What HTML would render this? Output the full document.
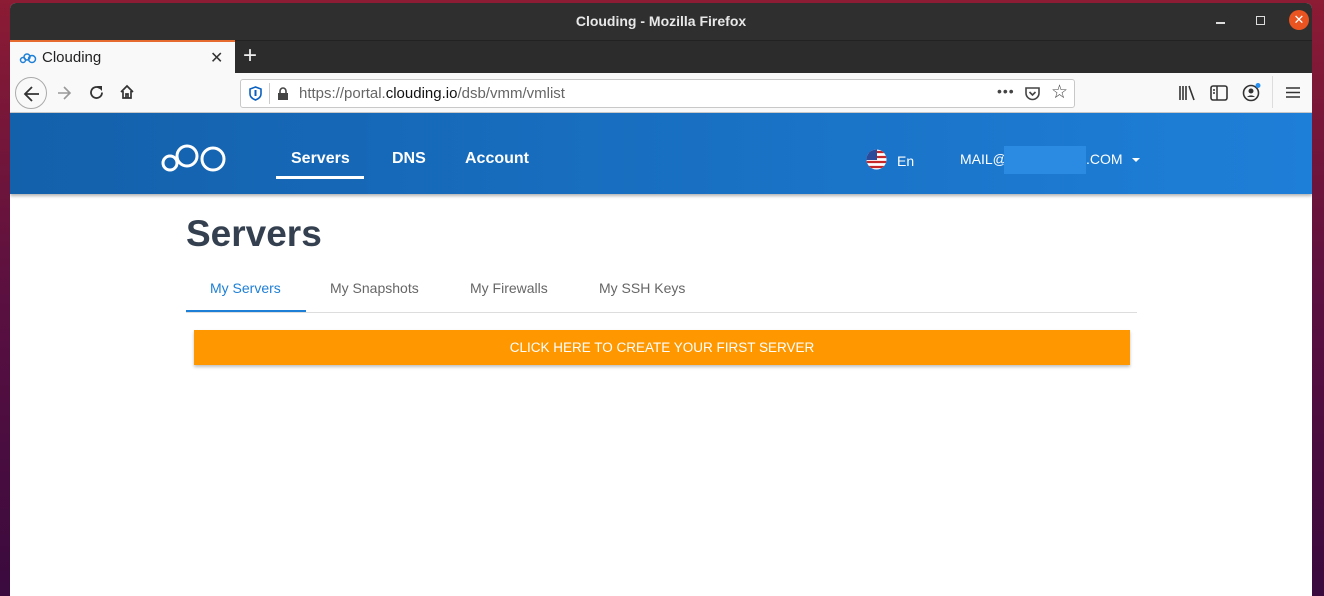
<!DOCTYPE html>
<html><head><meta charset="utf-8"><style>
*{margin:0;padding:0;box-sizing:border-box}
body{width:1324px;height:596px;overflow:hidden;position:relative;font-family:"Liberation Sans",sans-serif;background:linear-gradient(180deg,#8c1b34 0%,#5a1040 50%,#3a0a3e 100%)}
.a{position:absolute}
.win{left:10px;top:3px;width:1302px;height:593px;background:#fff;border-radius:6px 6px 0 0;overflow:hidden}
.title{left:0;top:0;width:1302px;height:37px;background:#2f2f2f;color:#e8e8e8;font-weight:bold;font-size:14px;text-align:center;line-height:37px}
.tabbar{left:0;top:37px;width:1302px;height:33px;background:#2c2c2c;border-top:1px solid #222}
.tab{left:0;top:37px;width:225px;height:34px;background:#f9f9fa;border-top:2px solid #e66b2f}
.nav{left:0;top:70px;width:1302px;height:40px;background:#f9f9fa;border-bottom:1px solid #ccc}
.url{left:230px;top:6px;width:835px;height:29px;background:#fff;border:1px solid #c8c8c8;border-radius:3px;font-size:15px;color:#666;line-height:27px}
.hdr{left:0;top:110px;width:1302px;height:81px;background:linear-gradient(90deg,#1360ab,#1e7fd8);box-shadow:0 2px 3px rgba(0,0,0,.3)}
.w{color:#fff}
</style></head><body>
<div class="a win">
 <div class="a title">Clouding - Mozilla Firefox</div>
 <div class="a" style="left:1206px;top:19px;width:9px;height:1.5px;background:#ddd"></div>
 <div class="a" style="left:1246px;top:13px;width:9px;height:9px;border:1.5px solid #ddd"></div>
 <div class="a" style="left:1279px;top:7px;width:20px;height:20px;border-radius:50%;background:#e95420;color:#fff;font-size:13px;text-align:center;line-height:20px">✕</div>
 <div class="a tabbar"></div>
 <div class="a tab"><svg class="a" style="left:9px;top:10px" width="18" height="12"><g fill="none" stroke="#1e7fd6" stroke-width="1.5"><circle cx="4" cy="8" r="2.5"/><circle cx="8" cy="5" r="3"/><circle cx="13" cy="7" r="3.5"/></g></svg>
 <div class="a" style="left:32px;top:7px;font-size:15px;color:#222">Clouding</div>
 <div class="a" style="left:200px;top:6px;font-size:16px;color:#333">✕</div></div>
 <div class="a" style="left:233px;top:40px;font-size:24px;color:#eee;line-height:26px">+</div>
 <div class="a nav">
  <div class="a" style="left:5px;top:4px;width:32px;height:32px;border:1px solid #aaa;border-radius:50%"><svg class="a" style="left:7px;top:7px" width="18" height="18"><path d="M16 9H3M9 2L2 9L9 16" fill="none" stroke="#333" stroke-width="1.8"/></svg></div>
  <svg class="a" style="left:46px;top:12px" width="16" height="16"><path d="M14 8H2M8 2L14 8L8 14" fill="none" stroke="#999" stroke-width="1.6"/></svg>
  <svg class="a" style="left:78px;top:11px" width="17" height="17"><path d="M14 8.5A5.5 5.5 0 1 1 12 4.3" fill="none" stroke="#333" stroke-width="1.8"/><path d="M9 2H14V7Z" fill="#333"/></svg>
  <svg class="a" style="left:109px;top:11px" width="16" height="16"><path d="M2 8L8 2L14 8M4 7V14H12V7M7 14V10H9V14" fill="none" stroke="#333" stroke-width="1.7"/></svg>
  <div class="a url">
   <svg class="a" style="left:8px;top:6px" width="13" height="15"><path d="M6.5 1L12 3V8C12 11 9 13 6.5 14C4 13 1 11 1 8V3Z" fill="none" stroke="#0a60c0" stroke-width="1.6"/><rect x="5.5" y="4" width="2" height="6" fill="#0a60c0"/></svg>
   <div class="a" style="left:28px;top:3px;width:1px;height:21px;background:#ccc"></div>
   <svg class="a" style="left:36px;top:7px" width="12" height="14"><rect x="1" y="6" width="10" height="7" fill="#444"/><path d="M3 6V4A3 3 0 0 1 9 4V6" fill="none" stroke="#444" stroke-width="1.6"/></svg>
   <span class="a" style="left:58px;top:0">https://portal.<span style="color:#111">clouding.io</span>/dsb/vmm/vmlist</span>
   <span class="a" style="left:756px;top:-2px;color:#444;font-size:14px;letter-spacing:1px">•••</span>
   <svg class="a" style="left:783px;top:6px" width="17" height="16"><path d="M2 2H15V7A6.5 6.5 0 0 1 2 7Z" fill="none" stroke="#444" stroke-width="1.6"/><path d="M5.5 6L8.5 9L11.5 6" fill="none" stroke="#444" stroke-width="1.6"/></svg>
   <div class="a" style="left:810px;top:-1px;font-size:19px;color:#444">☆</div>
  </div>
  <svg class="a" style="left:1168px;top:12px" width="18" height="16"><path d="M2 1V15M5 1V15M8 1V15M11 1L16 15" stroke="#333" stroke-width="1.6"/></svg>
  <svg class="a" style="left:1200px;top:12px" width="18" height="16"><rect x="1" y="1" width="16" height="14" rx="2" fill="none" stroke="#333" stroke-width="1.6"/><path d="M7 1V15M3 5H5M3 8H5" stroke="#333" stroke-width="1.5"/></svg>
  <svg class="a" style="left:1232px;top:9px" width="20" height="20"><circle cx="9" cy="11" r="7.5" fill="none" stroke="#333" stroke-width="1.6"/><circle cx="9" cy="9" r="2.5" fill="#333"/><path d="M5 15A5 4 0 0 1 13 15" fill="#333"/><circle cx="16" cy="3.5" r="2.5" fill="#2a90f0"/></svg>
  <div class="a" style="left:1262px;top:3px;width:1px;height:32px;background:#ddd"></div>
  <svg class="a" style="left:1276px;top:13px" width="14" height="13"><path d="M0 2H14M0 6.5H14M0 11H14" stroke="#333" stroke-width="1.6"/></svg>
 </div>
 <div class="a hdr">
  <svg class="a" style="left:151px;top:29px" width="66" height="32"><g fill="none" stroke="#fff" stroke-width="3"><circle cx="9" cy="21" r="7"/><circle cx="26" cy="14" r="10"/><circle cx="52" cy="17" r="11"/></g></svg>
  <div class="a w" style="left:281px;top:37px;font-size:16px;font-weight:bold">Servers</div>
  <div class="a" style="left:266px;top:63px;width:88px;height:3px;background:#fff"></div>
  <div class="a w" style="left:382px;top:37px;font-size:16px;font-weight:bold">DNS</div>
  <div class="a w" style="left:455px;top:37px;font-size:16px;font-weight:bold">Account</div>
  <svg class="a" style="left:856px;top:36px" width="21" height="21"><clipPath id="c"><circle cx="10.5" cy="10.5" r="10"/></clipPath><g clip-path="url(#c)"><rect width="21" height="21" fill="#fff"/><path d="M0 3H21M0 8H21M0 13H21M0 18H21" stroke="#c62828" stroke-width="2.2"/><rect width="11" height="11" fill="#2c4a9a"/></g></svg>
  <div class="a w" style="left:887px;top:40px;font-size:14px">En</div>
  <div class="a w" style="left:950px;top:38px;font-size:14px">MAIL@</div>
  <div class="a" style="left:994px;top:33px;width:82px;height:28px;background:#2b8ae2"></div>
  <div class="a w" style="left:1076px;top:38px;font-size:14px">.COM</div>
  <div class="a" style="left:1122px;top:45px;border:4px solid transparent;border-top:4px solid #fff"></div>
 </div>
 <div class="a" style="left:176px;top:210px;font-size:37px;font-weight:bold;color:#34404f">Servers</div>
 <div class="a" style="left:200px;top:277px;font-size:14px;color:#1e7fd6">My Servers</div>
 <div class="a" style="left:320px;top:277px;font-size:14px;color:#666">My Snapshots</div>
 <div class="a" style="left:460px;top:277px;font-size:14px;color:#666">My Firewalls</div>
 <div class="a" style="left:589px;top:277px;font-size:14px;color:#666">My SSH Keys</div>
 <div class="a" style="left:176px;top:309px;width:951px;height:1px;background:#ddd"></div>
 <div class="a" style="left:176px;top:307px;width:120px;height:2px;background:#1e7fd6"></div>
 <div class="a" style="left:184px;top:327px;width:936px;height:35px;background:#ff9800;box-shadow:0 2px 3px rgba(0,0,0,.25);color:#fff;font-size:13.5px;text-align:center;line-height:35px">CLICK HERE TO CREATE YOUR FIRST SERVER</div>
</div>
</body></html>
